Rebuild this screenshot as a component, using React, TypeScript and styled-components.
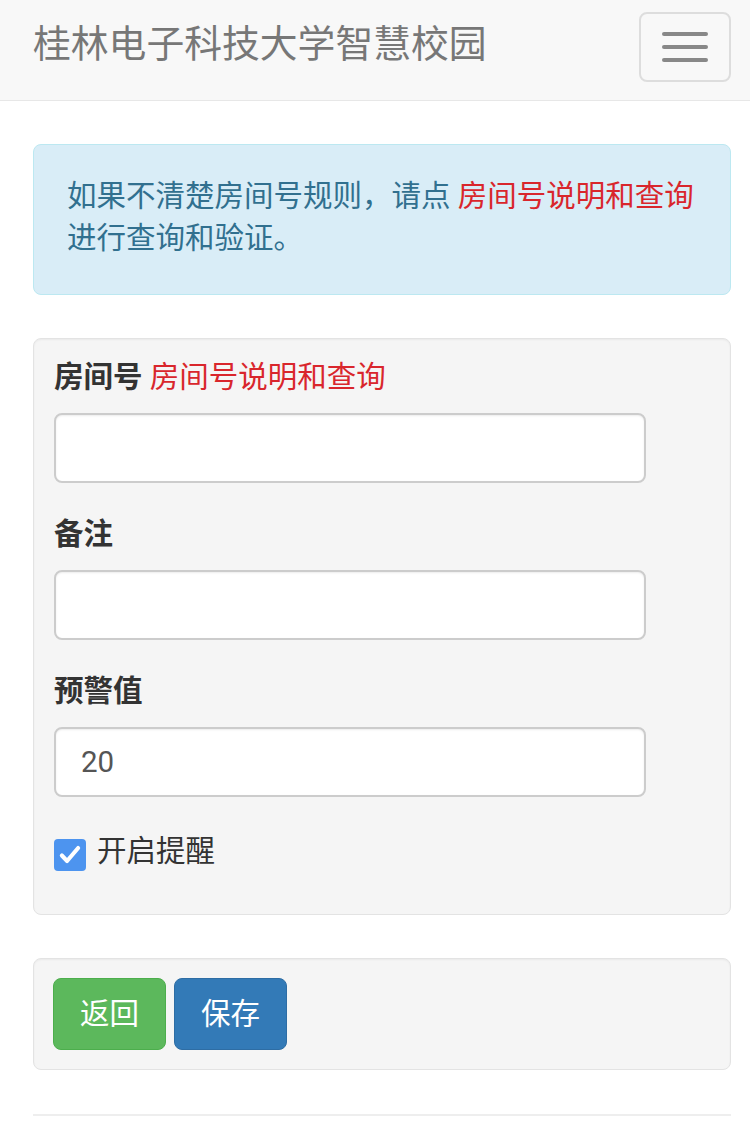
import React from "react";
import styled, { createGlobalStyle } from "styled-components";

const Global = createGlobalStyle`
  html, body { margin: 0; padding: 0; background: #fff; }
  body {
    font-family: Roboto, "Noto Sans CJK SC", "Noto Sans", sans-serif;
    color: #333;
    font-size: 29.5px;
    line-height: 42px;
  }
  * { box-sizing: border-box; }
`;

const Navbar = styled.header`
  height: 101px;
  background: #f8f8f8;
  border-bottom: 1px solid #e7e7e7;
  display: flex;
  justify-content: space-between;
  align-items: flex-start;
  padding: 0 19px 0 33px;
`;

const Brand = styled.div`
  margin-top: 23px;
  font-size: 37.8px;
  line-height: 42px;
  color: #777;
`;

const Toggle = styled.button`
  margin-top: 12px;
  width: 92px;
  height: 70px;
  background: transparent;
  border: 2px solid #ddd;
  border-radius: 8px;
  display: flex;
  flex-direction: column;
  align-items: center;
  justify-content: center;
  gap: 9px;
  padding: 0;
`;

const Bar = styled.span`
  display: block;
  width: 46px;
  height: 4px;
  border-radius: 2px;
  background: #888;
`;

const Container = styled.main`
  padding: 0 19px 0 33px;
`;

const Alert = styled.div`
  margin-top: 43px;
  background: #d9edf7;
  border: 1px solid #bce8f1;
  border-radius: 8px;
  color: #31708f;
  padding: 30px 20px 35px 33px;
  white-space: nowrap;
`;

const RedLink = styled.a`
  color: #d9262c;
  text-decoration: none;
  font-weight: normal;
`;

const Well = styled.section<{ $pad: string; $mt: number }>`
  margin-top: ${(p) => p.$mt}px;
  background: #f5f5f5;
  border: 1px solid #e3e3e3;
  border-radius: 8px;
  box-shadow: inset 0 1px 2px rgba(0, 0, 0, 0.05);
  padding: ${(p) => p.$pad};
`;

const FormGroup = styled.div<{ $last?: boolean }>`
  margin-bottom: ${(p) => (p.$last ? 0 : 30)}px;
`;

const Label = styled.label`
  display: block;
  font-weight: bold;
  margin-bottom: 15px;
  color: #333;
`;

const Input = styled.input`
  display: block;
  width: 592px;
  height: 70px;
  border: 2px solid #ccc;
  border-radius: 8px;
  background: #fff;
  box-shadow: inset 0 1px 2px rgba(0, 0, 0, 0.075);
  padding: 0 25px;
  font-family: Roboto, "Noto Sans CJK SC", sans-serif;
  font-size: 29.5px;
  color: #555;
  outline: none;
`;

const CheckRow = styled.label`
  display: flex;
  align-items: flex-start;
  gap: 11px;
  margin-top: 33px;
  color: #333;
`;

const CheckBox = styled.span`
  margin-top: 9px;
  width: 32px;
  height: 32px;
  border-radius: 4px;
  background: #4d94ef;
  display: flex;
  align-items: center;
  justify-content: center;
  flex-shrink: 0;
`;

const Buttons = styled.div`
  display: flex;
  gap: 8px;
`;

const Btn = styled.button<{ $bg: string; $border: string }>`
  height: 72px;
  padding: 0 26px;
  border-radius: 8px;
  border: 1px solid ${(p) => p.$border};
  background: ${(p) => p.$bg};
  color: #fff;
  font-family: Roboto, "Noto Sans CJK SC", sans-serif;
  font-size: 29.5px;
  line-height: 42px;
`;

const Rule = styled.hr`
  margin: 44px 0 0;
  border: 0;
  border-top: 2px solid #eee;
`;

export default function App() {
  return (
    <>
      <Global />
      <Navbar>
        <Brand>桂林电子科技大学智慧校园</Brand>
        <Toggle aria-label="menu">
          <Bar />
          <Bar />
          <Bar />
        </Toggle>
      </Navbar>
      <Container>
        <Alert>
          如果不清楚房间号规则，请点 <RedLink href="#">房间号说明和查询</RedLink>
          <br />
          进行查询和验证。
        </Alert>
        <Well $mt={43} $pad="17px 20px 42px 20px">
          <FormGroup>
            <Label>
              房间号 <RedLink href="#">房间号说明和查询</RedLink>
            </Label>
            <Input type="text" />
          </FormGroup>
          <FormGroup>
            <Label>备注</Label>
            <Input type="text" />
          </FormGroup>
          <FormGroup $last>
            <Label>预警值</Label>
            <Input type="text" defaultValue="20" />
          </FormGroup>
          <CheckRow>
            <CheckBox>
              <svg width="26" height="26" viewBox="0 0 24 24">
                <path d="M4.5 12.5l4.8 5L19.5 5.5" fill="none" stroke="#fff" strokeWidth="3.8" strokeLinecap="round" strokeLinejoin="round" />
              </svg>
            </CheckBox>
            开启提醒
          </CheckRow>
        </Well>
        <Well $mt={43} $pad="19px">
          <Buttons>
            <Btn $bg="#5cb85c" $border="#4cae4c">返回</Btn>
            <Btn $bg="#337ab7" $border="#2e6da4">保存</Btn>
          </Buttons>
        </Well>
        <Rule />
      </Container>
    </>
  );
}
